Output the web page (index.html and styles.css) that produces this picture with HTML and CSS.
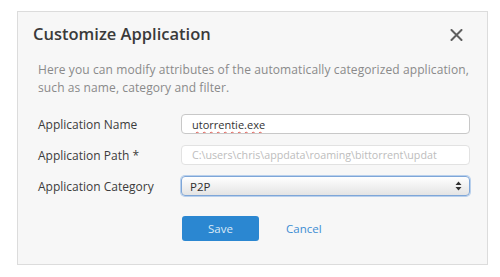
FILE: index.html
```html
<!DOCTYPE html>
<html lang="en">
<head>
    <meta charset="UTF-8">
    <title>Customize Application</title>
    <link rel="stylesheet" href="styles.css">
</head>
<body>
    <div class="dialog">
        <div class="head">
            <h2 class="title">Customize Application</h2>
            <svg class="close" width="13" height="12" viewBox="0 0 13 12">
                <path d="M1.5 1 L11.5 11 M11.5 1 L1.5 11" stroke="#5f5f5f" stroke-width="2" stroke-linecap="round"/>
            </svg>
        </div>
        <p class="desc">Here you can modify attributes of the automatically categorized application, such as name, category and filter.</p>

        <div class="form">
            <label class="lbl">Application Name</label>
            <div class="field"><span class="val spell">utorrentie.exe</span></div>

            <label class="lbl">Application Path *</label>
            <div class="field disabled"><span class="val">C:\users\chris\appdata\roaming\bittorrent\updat</span></div>

            <label class="lbl">Application Category</label>
            <div class="field select">
                <span class="val">P2P</span>
                <svg class="arrows" width="7" height="10" viewBox="0 0 7 10">
                    <path d="M0.5 4 L3.5 0.5 L6.5 4 Z M0.5 6 L3.5 9.5 L6.5 6 Z" fill="#333"/>
                </svg>
            </div>
        </div>

        <div class="actions">
            <button class="btn save">Save</button>
            <a class="cancel" href="#">Cancel</a>
        </div>
    </div>
</body>
</html>
```

FILE: styles.css
```css
body{margin: 0; padding: 0; background-color: white; font-family: "Open Sans", "Liberation Sans", sans-serif;}

.dialog{
    margin: 11px 0 0 17px;
    width: 469px;
    height: 252px;
    border: 1px solid #dcdcdc;
    background-color: #f7f7f7;
}

.head{
    display: flex;
    justify-content: space-between;
    align-items: center;
    padding: 12px 24px 0 15px;
}
.title{
    margin: 0;
    font-size: 16.5px;
    line-height: 20px;
    font-weight: 600;
    color: #3a3a3a;
}
.close{margin-top: 2px;}

.desc{
    margin: 17px 14px 0 20px;
    font-size: 12px;
    letter-spacing: 0.1px;
    line-height: 18px;
    color: #8a8a8a;
}

.form{
    display: grid;
    grid-template-columns: 143px 289px;
    row-gap: 11px;
    margin: 17px 0 0 20px;
    align-items: center;
}
.lbl{
    font-size: 12px;
    color: #3c3c3c;
}
.field{
    height: 20px;
    box-sizing: border-box;
    border: 1px solid #c8c8c8;
    border-radius: 4px;
    background-color: white;
    display: flex;
    align-items: center;
    padding: 0 10px;
    overflow: hidden;
    white-space: nowrap;
}
.val{font-size: 11px; color: #333;}
.spell{text-decoration: underline wavy #e0584f; text-decoration-thickness: 1px; text-underline-offset: 2px;}
.disabled{border-color: #e2e2e2;}
.disabled .val{color: #bdbdbd; font-size: 10.7px;}
.select{
    justify-content: space-between;
    padding: 0 7px 0 8px;
    border-color: #7ea6d8;
    background: linear-gradient(#ffffff, #e4e4e4);
    box-shadow: 0 0 0 1px #b9d0ec;
}
.select .val{font-size: 11.5px; color: #2e2e2e;}

.actions{
    display: flex;
    align-items: center;
    margin: 20px 0 0 164px;
}
.btn{
    width: 77px;
    height: 25px;
    border: none;
    border-radius: 3px;
    background-color: #2b87d1;
    color: #dbeaf7;
    font-family: inherit;
    font-size: 11.5px;
    cursor: pointer;
}
.cancel{
    margin-left: 27px;
    font-size: 11.5px;
    color: #3d8dd3;
    text-decoration: none;
}
```
